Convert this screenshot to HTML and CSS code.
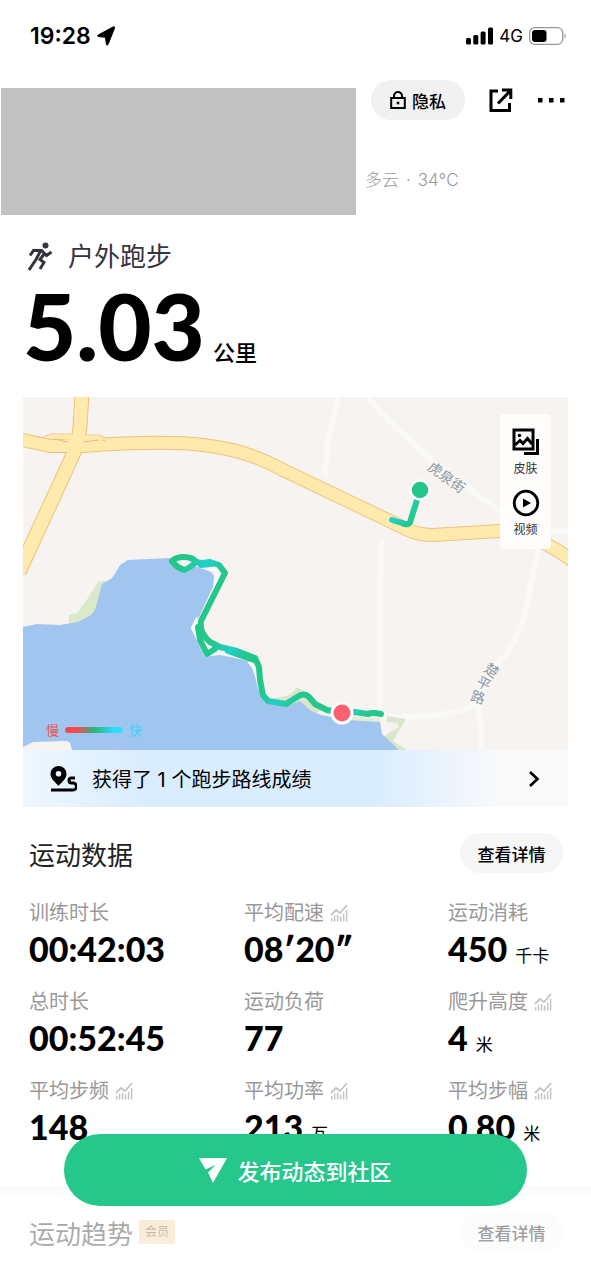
FILE: index.html
```
<!DOCTYPE html>
<html lang="zh-CN">
<head>
    <meta charset="UTF-8">
    <meta name="viewport" content="width=device-width, initial-scale=1">
    <title>户外跑步</title>
    <link rel="stylesheet" href="styles.css">
</head>
<body>
    <!-- 图标 -->
    <svg class="sprite" width="0" height="0">
        <symbol id="icon-trend" viewBox="0 0 18 18">
            <path d="M1 11 L6 6 L10 9 L17 1" fill="none" stroke="currentColor" stroke-width="1.800"/>
            <path d="M1.700 14v3.500M4.600 11.500v6M7.600 11v6.500M10.600 12.500v5M13.600 9.500v8M16.600 6v11.500" stroke="currentColor" stroke-width="1.500"/>
        </symbol>
    </svg>

    <div class="status-bar">
        <span class="time">19:28</span>
        <svg width="18" height="20" viewBox="0 0 18 20"><path d="M17.600 2 L11 18.500 Q10 20 9.400 18.300 L8.500 11.300 L1.500 10.600 Q-0.300 10.200 1.200 9 L16 1 Q18 0.200 17.600 2Z" stroke="#000" stroke-width="1"/></svg>
        <div class="status-right">
            <svg width="27" height="18" viewBox="0 0 27 18"><rect x="0" y="11" width="5" height="6.500" rx="1.500"/><rect x="7.300" y="8" width="5" height="9.500" rx="1.500"/><rect x="14.600" y="4.500" width="5" height="13" rx="1.500"/><rect x="22" y="0.500" width="5" height="17" rx="1.500"/></svg>
            <span class="network">4G</span>
            <svg width="38" height="18" viewBox="0 0 38 18"><rect x="0.700" y="0.700" width="33" height="16.600" rx="5" fill="none" stroke="#999" stroke-width="1.300"/><rect x="3" y="3" width="14.500" height="12" rx="3"/><path d="M35.500 6 Q38 9 35.500 12Z" fill="#999"/></svg>
        </div>
    </div>

    <header class="header">
        <div class="user-block"></div>
        <div class="header-side">
            <div class="actions">
                <button class="privacy">
                    <svg width="16" height="18" viewBox="0 0 16 18" fill="none" stroke="#000" stroke-width="2"><rect x="1.200" y="7" width="13.600" height="10"/><path d="M4 7V5a4 4 0 0 1 8 0v2"/><path d="M6.700 12h2.600" stroke-width="2.600"/></svg>
                    隐私
                </button>
                <button class="icon-btn" aria-label="分享">
                    <svg width="24" height="26" viewBox="0 0 24 26" fill="none" stroke="#000" stroke-width="3"><path d="M9 4H2V23.500H20.500V16"/><path d="M13 3H21.800V12M21.500 3.500L9 16.500"/></svg>
                </button>
                <button class="icon-btn" aria-label="更多">
                    <svg width="28" height="6" viewBox="0 0 28 6"><path d="M1 1h4.500v4.500H1zM12 1h4.500v4.500H12zM23 1h4.500v4.500H23z"/></svg>
                </button>
            </div>
            <div class="weather">多云<span class="dot">·</span>34°C</div>
        </div>
    </header>

    <section class="summary">
        <h1 class="sport">
            <svg width="27" height="30" viewBox="0 0 27 30" fill="none" stroke="#37323f" stroke-width="3"><circle cx="18.500" cy="3.500" r="3" fill="#37323f" stroke="none"/><path d="M3 13.500 L6.500 8.500 H14.500 L19.500 13.500 L24.500 10"/><path d="M13.500 9 L9 17.500 L2 28"/><path d="M17.500 11.500 L13 17.500 L17 20.500 L13 27"/></svg>
            户外跑步
        </h1>
        <div class="distance"><span class="distance-num">5.03</span><span class="distance-unit">公里</span></div>
    </section>

    <section class="map-card">
        <div class="map">
            <svg class="map-canvas" viewBox="0 0 545 353">
                <defs>
                    <linearGradient id="track" gradientUnits="userSpaceOnUse" x1="149" y1="158" x2="177" y2="176" spreadMethod="reflect">
                        <stop offset="0" stop-color="#24c789"/>
                        <stop offset="0.5" stop-color="#24c78c"/>
                        <stop offset="1" stop-color="#22d0cc"/>
                    </linearGradient>
                </defs>
                <rect width="545" height="353" fill="#f6f3f1"/>

                <!-- 小路 -->
                <g class="lane">
                    <path d="M315 0 L305 43 L302 80"/>
                    <path d="M345 0 Q360 20 384 40 L410 65 L444 90 L482 118"/>
                    <path d="M359 143 L357 193 V316 L364 320 Q420 321 444 311 L454 306"/>
                    <path d="M517 148 L507 190 Q503 228 484 256 L469 273 L454 306 L458 330 L459 353"/>
                    <path d="M520 135 L545 134"/>
                </g>

                <!-- 绿地 -->
                <path d="M46 218 L54 216 L65 201 L75 185 L82 183 L78 220 L46 228Z" fill="#dae9c9"/>
                <path d="M248 302 L267 298 L274 290 L284 296 L300 310 L290 320 L262 311Z" fill="#dae6ca"/>
                <path d="M364 319 L383 322 L370 344 L384 353 H372 L361 339 L376 330 L374 326 L364 325Z" fill="#dae6ca"/>
                <path d="M320 319 L357 321 V329 L320 326Z" fill="#e4ecd8"/>

                <!-- 湖 -->
                <path d="M0 230 L14 227 L37 228 L55 225 L68 218 L72 213 L79 187 L89 181 L93 175 L97 168 L105 163 L147 161 L160 172 L172 169 L188 175 L191 179 L190 190 L175 222 L171 231 L182 260 L197 258 L227 264 L239 301 L262 310 L277 304 L288 314 L298 318 L325 323 L357 325 L359 337 L376 353 H49 L47 346 L44 344 L10 345 L0 350Z" fill="#a0c5ee"/>
                <path class="shore" d="M174 166 L191 171 L196 180 L193 190 M175 221 L170 231 L183 258 M226 264 L233 273 L237 292"/>

                <!-- 主路 -->
                <path class="road-edge wide" d="M59 -4 L57 30 Q56 44 49 60 L-4 175"/>
                <path class="road-edge" d="M-4 42 L0 43 L28 49 H60 Q140 43 180 48 Q225 53 260 73 L327 105 L377 129 Q392 138 410 138 L477 134 Q505 132 550 164"/>
                <path d="M20 40 L28 37 H52 M58 38 H76 L88 43" fill="none" stroke="#eec27a" stroke-width="1"/>
                <path class="road wide" d="M59 -4 L57 30 Q56 44 49 60 L-4 175"/>
                <path class="road" d="M-4 42 L0 43 L28 49 H60 Q140 43 180 48 Q225 53 260 73 L327 105 L377 129 Q392 138 410 138 L477 134 Q505 132 550 164"/>
                <path d="M22 41 L30 37.500 H50 V43 M60 43 V38.500 H76 L87 44Z" fill="#feeaad"/>
                <path d="M31 42 L45 45 M60 45 L76 43 M80 43 L82 44" fill="none" stroke="#e6bd7d" stroke-width="1.200"/>

                <!-- 跑步轨迹 -->
                <g class="track" stroke="url(#track)">
                    <path d="M149 164 Q153 160 161 160 Q170 160 173 165 Q167 171 161 173 Q153 170 149 164"/>
                    <path d="M172 165 L179 166 L187 165 L196 168 L202 176 L194 192 L178 224 Q176 236 187 245 L197 250 L214 254 L232 261 L236 270 L237 283 L240 298 L245 304 L263 307 L274 300 Q281 295 286 300 L292 307 L304 313 L319 316 L332 315 L345 317 Q349 315 358 317"/>
                    <path d="M175 230 L177 243 L184 257 L192 252 M178 168 L188 167 M205 254 L231 263"/>
                    <path d="M369 123 L379 126 Q387 130 388 122 L394 103"/>
                </g>
                <circle cx="397" cy="93" r="9.500" fill="#24c789" stroke="#fff" stroke-width="2.500"/>
                <circle cx="319" cy="316" r="10" fill="#fc6170" stroke="#fff" stroke-width="3"/>

                <g class="road-name">
                    <text transform="translate(424 80) rotate(36)">虎泉街</text>
                    <text transform="translate(469 273) rotate(35)">楚</text>
                    <text transform="translate(461 286) rotate(28)">平</text>
                    <text transform="translate(455 300) rotate(18)">路</text>
                </g>
            </svg>

            <div class="tools">
                <button class="tool">
                    <svg width="28" height="28" viewBox="0 0 28 28" fill="none" stroke="#000" stroke-width="3"><rect x="2" y="2" width="19" height="19"/><path d="M3 17 L8 12.500 L11 15.500 L15.500 10.500 L20 16"/><circle cx="7.500" cy="7.500" r="1.800" fill="#000" stroke="none"/><path d="M25.500 11V25.500H12"/></svg>
                    皮肤
                </button>
                <button class="tool">
                    <svg width="28" height="28" viewBox="0 0 28 28"><circle cx="14" cy="14" r="11.800" fill="none" stroke="#000" stroke-width="2.800"/><path d="M11 9.500 L19 14 L11 18.500Z"/></svg>
                    视频
                </button>
            </div>

            <div class="legend">
                <span class="slow">慢</span>
                <span class="legend-bar"></span>
                <span class="fast">快</span>
            </div>
        </div>

        <a class="route" href="#">
            <svg width="28" height="28" viewBox="0 0 28 28"><path d="M9.500 1a8 8 0 0 1 8 8c0 5-5 8-8 12c-3-4-8-7-8-12a8 8 0 0 1 8-8zM9.500 6a2.800 2.800 0 1 0 0 5.600a2.800 2.800 0 1 0 0-5.600z" fill-rule="evenodd"/><path d="M26 13h-3.500a2.500 2.500 0 0 0 0 5h1.500a3.500 3.500 0 0 1 0 7H2" fill="none" stroke="#000" stroke-width="3"/></svg>
            <span class="route-text">获得了 1 个跑步路线成绩</span>
            <svg width="12" height="18" viewBox="0 0 12 18"><path d="M2 2 L9.500 9 L2 16" fill="none" stroke="#000" stroke-width="2.600"/></svg>
        </a>
    </section>

    <section class="panel">
        <div class="panel-head">
            <h2>运动数据</h2>
            <button class="more">查看详情</button>
        </div>
        <dl class="stats">
            <div class="stat">
                <dt>训练时长</dt>
                <dd>00:42:03</dd>
            </div>
            <div class="stat">
                <dt>平均配速 <svg class="trend"><use href="#icon-trend"/></svg></dt>
                <dd>08′20″</dd>
            </div>
            <div class="stat">
                <dt>运动消耗</dt>
                <dd>450<span class="unit">千卡</span></dd>
            </div>
            <div class="stat">
                <dt>总时长</dt>
                <dd>00:52:45</dd>
            </div>
            <div class="stat">
                <dt>运动负荷</dt>
                <dd>77</dd>
            </div>
            <div class="stat">
                <dt>爬升高度 <svg class="trend"><use href="#icon-trend"/></svg></dt>
                <dd>4<span class="unit">米</span></dd>
            </div>
            <div class="stat">
                <dt>平均步频 <svg class="trend"><use href="#icon-trend"/></svg></dt>
                <dd>148</dd>
            </div>
            <div class="stat">
                <dt>平均功率 <svg class="trend"><use href="#icon-trend"/></svg></dt>
                <dd>213<span class="unit">瓦</span></dd>
            </div>
            <div class="stat">
                <dt>平均步幅 <svg class="trend"><use href="#icon-trend"/></svg></dt>
                <dd>0.80<span class="unit">米</span></dd>
            </div>
        </dl>
    </section>

    <section class="panel next">
        <div class="panel-head">
            <h2>运动趋势</h2>
            <span class="vip">会员</span>
            <button class="more">查看详情</button>
        </div>
    </section>

    <!-- 底部发布按钮 -->
    <div class="footer">
        <button class="publish">
            <svg width="28" height="26" viewBox="0 0 28 26"><path d="M0 1 H28 L14 26 L9 15.500 L16.500 8 L6.500 12.500Z" fill="#fff"/></svg>
            发布动态到社区
        </button>
    </div>
</body>
</html>
```
FILE: styles.css
```
* {
    box-sizing: border-box;
}
body {
    margin: 0;
    background: #fff;
    color: #000;
    font-family: Inter, "Noto Sans CJK SC", sans-serif;
}
button {
    border: 0;
    padding: 0;
    background: none;
    color: inherit;
    font-family: inherit;
    cursor: pointer;
}
svg {
    display: block;
    flex: none;
}
h1, h2, dl, dd {
    margin: 0;
}
.sprite {
    position: absolute;
}

/* 状态栏 */
.status-bar {
    display: flex;
    align-items: center;
    gap: 6px;
    height: 72px;
    padding: 0 24px 0 30px;
}
.time {
    font-size: 23px;
    font-weight: 600;
}
.status-right {
    display: flex;
    align-items: center;
    gap: 6px;
    margin-left: auto;
}
.network {
    font-size: 17px;
}

/* 头部 */
.header {
    display: flex;
    gap: 9px;
    padding: 8px 26px 0 1px;
}
.user-block {
    flex: 0 1 355px;
    height: 127px;
    margin-top: 8px;
    background: #c2c2c2;
}
.header-side {
    flex: 1;
}
.actions {
    display: flex;
    align-items: center;
    justify-content: space-between;
    padding-left: 6px;
}
.privacy {
    display: flex;
    align-items: center;
    justify-content: center;
    gap: 6px;
    width: 94px;
    height: 40px;
    border-radius: 20px;
    background: #f1f1f1;
    font-size: 17px;
    font-weight: 500;
}
.weather {
    margin-top: 46px;
    color: #999;
    font-size: 17px;
    font-weight: 300;
    line-height: 28px;
}
.dot {
    margin: 0 7px;
}

/* 距离 */
.summary {
    padding: 23px 23px 0;
}
.sport {
    display: flex;
    align-items: center;
    gap: 14px;
    padding-left: 4px;
    color: #37323f;
    font-size: 26px;
    font-weight: 400;
    line-height: 38px;
}
.distance {
    display: flex;
    align-items: baseline;
    gap: 8px;
    height: 121px;
}
.distance-num {
    font-family: Lato, sans-serif;
    font-size: 92px;
    font-weight: 900;
    line-height: 100px;
}
.distance-unit {
    font-size: 22px;
    font-weight: 500;
    line-height: 24px;
}

/* 地图 */
.map-card {
    margin: 0 23px;
}
.map {
    position: relative;
}
.map-canvas {
    width: 100%;
    height: auto;
}
.lane {
    fill: none;
    stroke: #f9f9f7;
    stroke-width: 6;
}
.shore {
    fill: none;
    stroke: #fbfaf9;
    stroke-width: 4;
}
.road-edge {
    fill: none;
    stroke: #eec27a;
    stroke-width: 14;
}
.road {
    fill: none;
    stroke: #feeaad;
    stroke-width: 12;
}
.road-edge.wide {
    stroke-width: 15;
}
.road.wide {
    stroke-width: 13;
}
.track {
    fill: none;
    stroke-width: 6;
    stroke-linecap: round;
    stroke-linejoin: round;
}
.road-name {
    fill: #8f98a6;
    font-size: 14px;
    text-anchor: middle;
    dominant-baseline: central;
}
.tools {
    position: absolute;
    top: 17px;
    right: 17px;
    display: flex;
    flex-direction: column;
    gap: 10px;
    width: 51px;
    padding: 14px 0 9px;
    border-radius: 4px;
    background: #fefdfb;
}
.tool {
    display: flex;
    flex-direction: column;
    align-items: center;
    gap: 3px;
    color: #333;
    font-size: 12px;
    line-height: 20px;
}
.legend {
    position: absolute;
    left: 23px;
    bottom: 10px;
    display: flex;
    align-items: center;
    gap: 6px;
    font-size: 13px;
    line-height: 20px;
}
.slow {
    color: #ee5254;
}
.fast {
    color: #3bd3f5;
}
.legend-bar {
    width: 58px;
    height: 6px;
    border-radius: 3px;
    background: linear-gradient(90deg, #fb4850 20%, #2cb578 50%, #2edcff 85%);
}
.route {
    display: flex;
    align-items: center;
    height: 57px;
    padding: 0 28px 0 26px;
    background: linear-gradient(90deg, #f0f7ff 0%, #d9edff 22%, #d9edff 65%, #fafafa 88%);
    color: #000;
    font-size: 20px;
    text-decoration: none;
}
.route-text {
    flex: 1;
    margin-left: 15px;
}

/* 数据 */
.panel {
    padding: 26px 28px 0 29px;
}
.panel-head {
    display: flex;
    align-items: center;
    height: 40px;
}
.panel-head h2 {
    color: #222;
    font-size: 26px;
    font-weight: 400;
}
.more {
    width: 103px;
    height: 40px;
    margin-left: auto;
    border-radius: 20px;
    background: #f6f6f6;
    font-size: 17px;
    font-weight: 500;
}
.stats {
    display: grid;
    grid-template-columns: 215fr 204fr 115fr;
    row-gap: 17px;
    margin-top: 25px;
}
.stat dt {
    display: flex;
    align-items: center;
    gap: 6px;
    color: #999;
    font-size: 20px;
    line-height: 30px;
    white-space: nowrap;
}
.stat dd {
    display: flex;
    align-items: baseline;
    height: 42px;
    font-family: Lato, "Noto Sans CJK SC", sans-serif;
    font-size: 34px;
    font-weight: 900;
    line-height: 42px;
    white-space: nowrap;
}
.trend {
    width: 18px;
    height: 18px;
    color: #c4c4c4;
}
.unit {
    margin-left: 8px;
    font-size: 17px;
    font-weight: 400;
    line-height: 20px;
}
.next {
    margin-top: 38px;
    border-top: 10px solid #f8f8f8;
    padding-top: 16px;
}
.vip {
    margin-left: 6px;
    padding: 0 6px;
    border-radius: 3px;
    background: #f5cf9f;
    color: #6b4a20;
    font-size: 12px;
    line-height: 24px;
}

/* 底部 */
.footer {
    position: fixed;
    right: 0;
    bottom: 0;
    left: 0;
    padding: 0 64px 74px;
    background: linear-gradient(rgba(255, 255, 255, 0), rgba(255, 255, 255, 0.6) 60%, rgba(255, 255, 255, 0.7));
}
.publish {
    display: flex;
    align-items: center;
    justify-content: center;
    gap: 10px;
    width: 100%;
    height: 72px;
    border-radius: 36px;
    background: #25c78b;
    color: #fff;
    font-size: 22px;
    font-weight: 500;
}
```
